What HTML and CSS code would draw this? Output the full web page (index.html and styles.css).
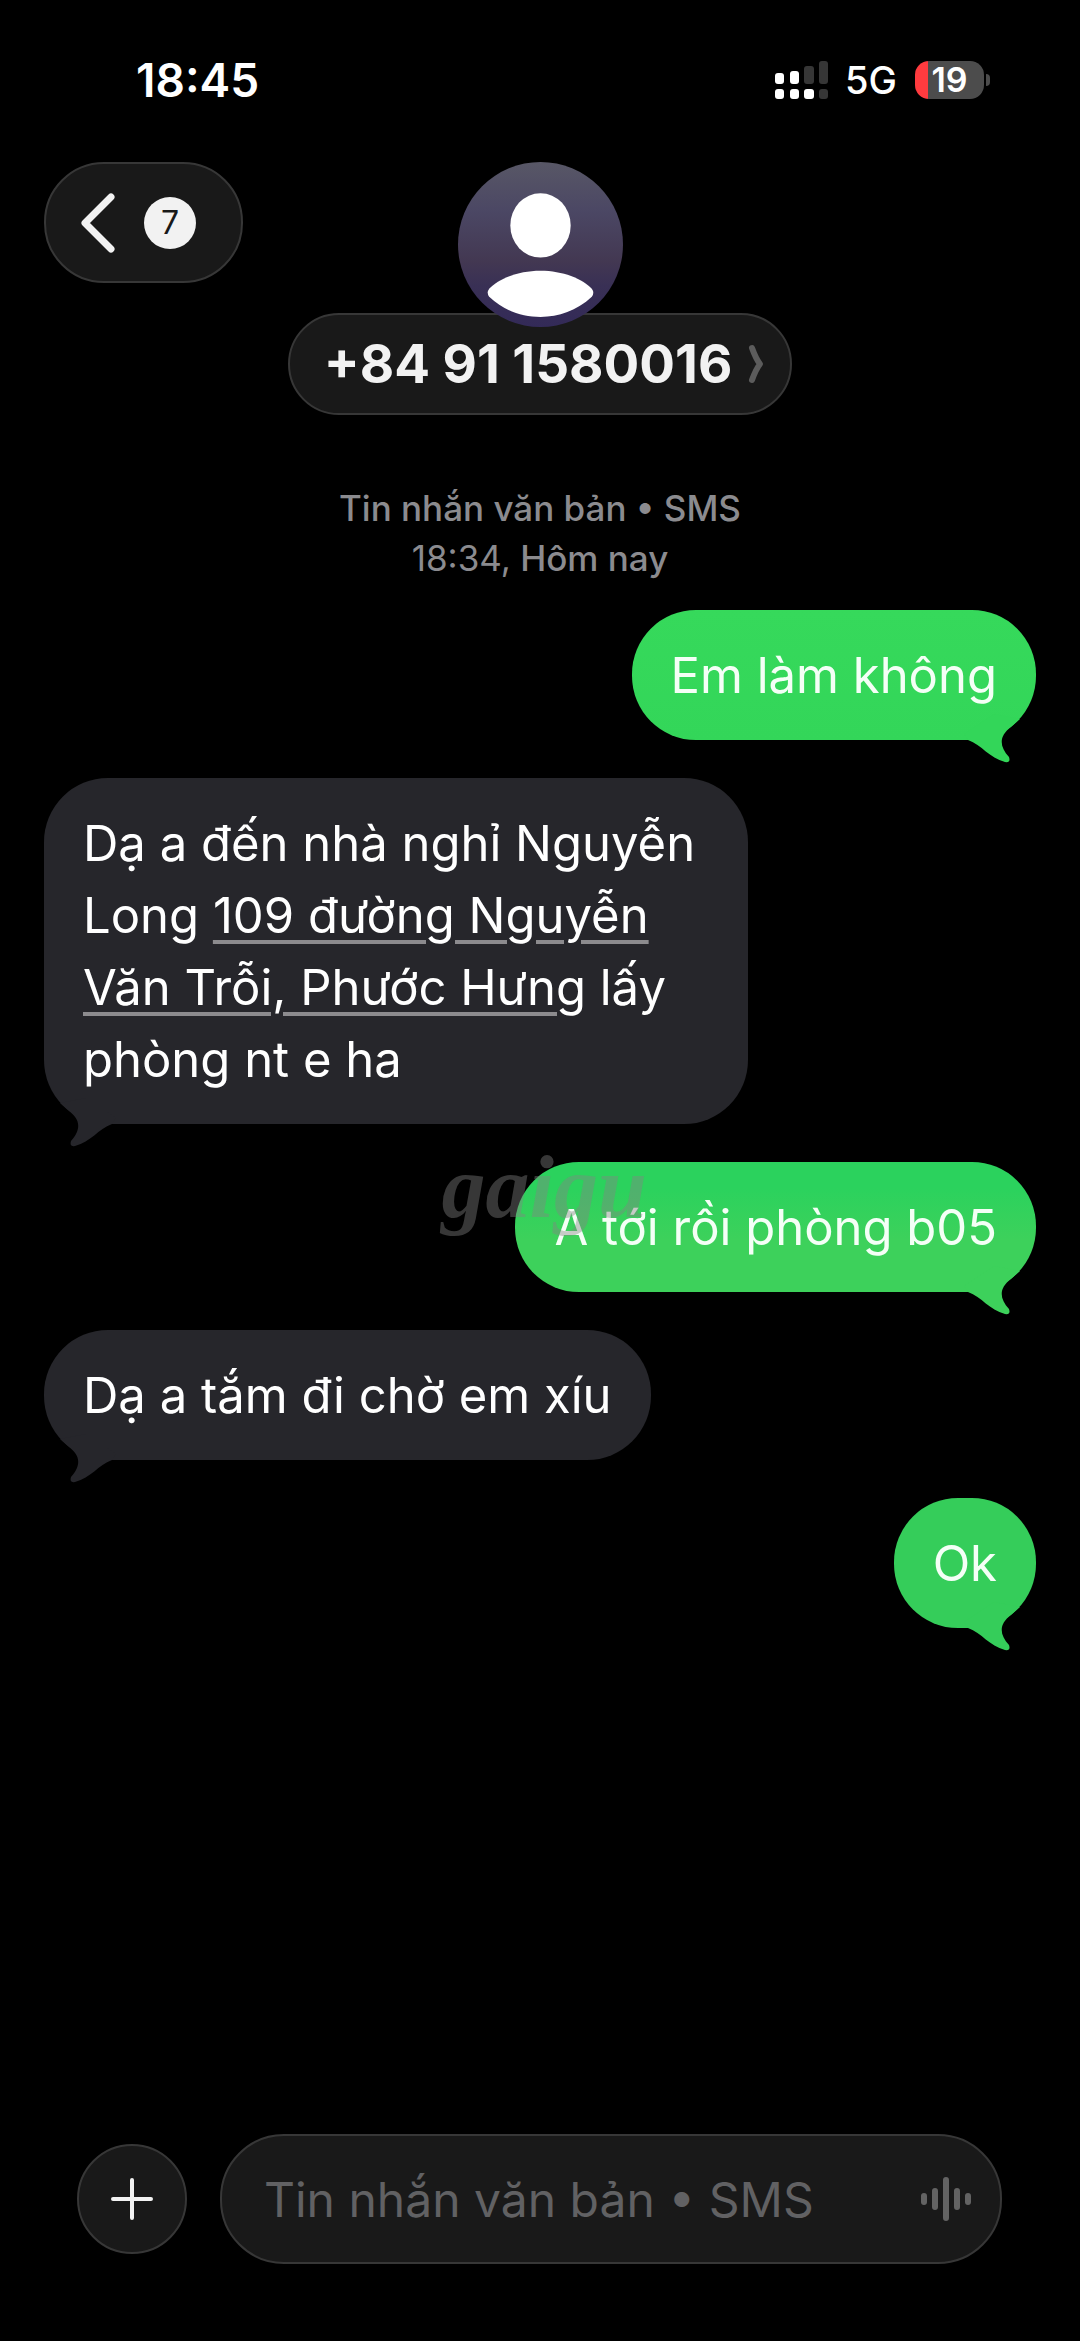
FILE: index.html
```html
<!DOCTYPE html>
<html lang="vi">
<head>
<meta charset="utf-8">
<meta name="viewport" content="width=device-width, initial-scale=1">
<title>Tin nhắn</title>
<link rel="stylesheet" href="styles.css">
</head>
<body>
<svg width="0" height="0" class="defs" aria-hidden="true">
  <symbol id="tail" viewBox="0 0 72 50">
    <path d="M4 26 C18 31 25 44 41 48 Q47 49 45 43 C35 32 35 22 47 13 L56 5 L30 0 L0 20 Z"/>
  </symbol>
</svg>

<div class="status">
  <time class="clock">18:45</time>
  <div class="indicators">
    <svg class="signal" width="54" height="38" viewBox="0 0 54 38" aria-hidden="true">
      <g fill="#fff">
        <rect x="0" y="12" width="9" height="11" rx="3"/>
        <rect x="15" y="10" width="9" height="13" rx="3"/>
        <rect x="0" y="28" width="9" height="10" rx="3"/>
        <rect x="15" y="28" width="9" height="10" rx="3"/>
        <rect x="29" y="28" width="10" height="10" rx="3"/>
      </g>
      <g fill="#363636">
        <rect x="29" y="5" width="10" height="18" rx="3"/>
        <rect x="44" y="0" width="9" height="23" rx="3"/>
        <rect x="44" y="28" width="9" height="10" rx="3"/>
      </g>
    </svg>
    <span class="network">5G</span>
    <span class="battery">19</span>
  </div>
</div>

<header class="header">
  <button class="back glass" type="button" aria-label="Quay lại">
    <svg width="36" height="60" viewBox="0 0 36 60" fill="none" stroke="#f2f2f2" stroke-width="7" stroke-linecap="round" stroke-linejoin="round" aria-hidden="true"><path d="M31 4 L5 30 L31 56"/></svg>
    <span class="unread">7</span>
  </button>
  <div class="contact">
    <svg class="avatar" width="165" height="165" viewBox="0 0 164 164" aria-hidden="true">
      <defs>
        <linearGradient id="dusk" x1="0" y1="0" x2="0" y2="1">
          <stop offset="0" stop-color="#585766"/>
          <stop offset=".3" stop-color="#4b4764"/>
          <stop offset=".6" stop-color="#433852"/>
          <stop offset=".75" stop-color="#393055"/>
          <stop offset="1" stop-color="#332a58"/>
        </linearGradient>
      </defs>
      <circle cx="82" cy="82" r="82" fill="url(#dusk)"/>
      <ellipse cx="82" cy="63" rx="30" ry="32" fill="#fff"/>
      <path d="M82 108 C104 108 124 116 133 126 Q136 130 133 134 C118 148 100 154 82 154 C64 154 46 148 31 134 Q28 130 31 126 C40 116 60 108 82 108 Z" fill="#fff"/>
    </svg>
    <button class="name glass" type="button">
      <span>+84 91 1580016</span>
      <svg width="16" height="40" viewBox="0 0 16 40" fill="none" stroke="#5c5c5c" stroke-width="6" stroke-linecap="round" stroke-linejoin="round" aria-hidden="true"><path d="M4 4 Q8 15 12 20 Q8 25 4 36"/></svg>
    </button>
  </div>
</header>

<main class="thread">
  <p class="stamp">Tin nhắn văn bản • SMS<br><span class="stamp-time">18:34,</span> Hôm nay</p>

  <div class="bubble sent">Em làm không<svg class="tail" aria-hidden="true"><use href="#tail"/></svg></div>

  <div class="bubble received">Dạ a đến nhà nghỉ Nguyễn Long <a href="#map">109 đường Nguyễn Văn Trỗi, Phước Hưng</a> lấy phòng nt e ha<svg class="tail" aria-hidden="true"><use href="#tail"/></svg></div>

  <div class="bubble sent mid">A tới rồi phòng b05<svg class="tail" aria-hidden="true"><use href="#tail"/></svg><span class="watermark">gaigu</span></div>

  <div class="bubble received">Dạ a tắm đi chờ em xíu<svg class="tail" aria-hidden="true"><use href="#tail"/></svg></div>

  <div class="bubble sent late">Ok<svg class="tail" aria-hidden="true"><use href="#tail"/></svg></div>
</main>

<form class="composer">
  <button class="plus glass" type="button" aria-label="Thêm">
    <svg width="42" height="42" viewBox="0 0 42 42" stroke="#f2f2f2" stroke-width="4" stroke-linecap="round" aria-hidden="true"><path d="M21 2V40M2 21H40"/></svg>
  </button>
  <div class="field glass">
    <input type="text" placeholder="Tin nhắn văn bản • SMS" aria-label="Tin nhắn văn bản">
    <button class="voice" type="button" aria-label="Ghi âm">
      <svg width="52" height="46" viewBox="0 0 52 46" stroke="#636363" stroke-width="6" stroke-linecap="round" aria-hidden="true"><path d="M4 20V26M15 15V31M26 4V42M37 15V31M48 20V26"/></svg>
    </button>
  </div>
</form>
</body>
</html>
```

FILE: styles.css
```css
* {
  box-sizing: border-box;
}

body {
  margin: 0;
  min-height: 100vh;
  display: flex;
  flex-direction: column;
  background: #000;
  color: #fff;
  font-family: Inter, "Liberation Sans", sans-serif;
}

button,
input {
  margin: 0;
  padding: 0;
  border: 0;
  background: none;
  color: inherit;
  font: inherit;
}

svg {
  display: block;
  flex: none;
}

.defs {
  position: absolute;
}

.glass {
  background: #191919;
  border: 2px solid #373737;
}

/* Status bar */
.status {
  display: flex;
  justify-content: space-between;
  align-items: center;
  padding: 52px 90px 54px 136px;
  line-height: 56px;
}

.clock {
  font-size: 46px;
  font-weight: 600;
}

.indicators {
  display: flex;
  align-items: center;
}

.network {
  margin: 0 18px 0 16px;
  font-size: 38px;
  font-weight: 500;
}

.battery {
  position: relative;
  width: 69px;
  height: 38px;
  margin-right: 6px;
  border-radius: 14px;
  background: linear-gradient(90deg, #ff3b3f 13px, #4c4c4c 13px);
  font-size: 34px;
  font-weight: 600;
  line-height: 38px;
  text-align: center;
}

.battery::after {
  content: "";
  position: absolute;
  top: 13px;
  right: -6px;
  width: 4px;
  height: 12px;
  border-radius: 0 4px 4px 0;
  background: #4c4c4c;
}

/* Conversation header */
.header {
  display: grid;
  grid-template-columns: 1fr auto 1fr;
  align-items: start;
  padding: 0 44px;
}

.back {
  display: flex;
  align-items: center;
  gap: 28px;
  width: 199px;
  height: 121px;
  padding-left: 34px;
  border-radius: 60px;
}

.unread {
  width: 52px;
  height: 52px;
  border-radius: 50%;
  background: #f2f2f2;
  color: #191919;
  font-size: 32px;
  line-height: 52px;
  text-align: center;
}

.contact {
  display: flex;
  flex-direction: column;
  align-items: center;
}

.avatar {
  z-index: 1;
  margin-bottom: -14px;
}

.name {
  display: flex;
  align-items: center;
  gap: 16px;
  height: 102px;
  padding: 0 26px 0 34px;
  border-radius: 51px;
  color: #f2f2f2;
  font-size: 53px;
  font-weight: 700;
}

/* Messages */
.thread {
  flex: 1;
  display: flex;
  flex-direction: column;
  gap: 38px;
  padding: 68px 44px;
}

.stamp {
  margin: 0 0 -11px;
  color: #8b8b8f;
  font-size: 35px;
  font-weight: 500;
  line-height: 50px;
  text-align: center;
}

.stamp-time {
  font-weight: 400;
}

.bubble {
  position: relative;
  max-width: 71%;
  padding: 30px 39px 28px;
  border-radius: 64px;
  font-size: 49px;
  line-height: 72px;
}

.sent {
  align-self: flex-end;
  background: linear-gradient(#36d95b, #33d659);
  color: #f4fff6;
  fill: #33d659;
}

.sent.mid {
  background: linear-gradient(#2bd25d 20%, #3dd15b 60%);
  fill: #3dd15b;
}

.sent.late {
  background: #35cd5a;
  fill: #35cd5a;
}

.received {
  align-self: flex-start;
  background: #26262b;
  fill: #26262b;
}

.bubble a {
  color: inherit;
  text-decoration: underline;
  text-decoration-color: #8c8b8e;
  text-decoration-thickness: 4px;
  text-underline-offset: 7px;
}

.tail {
  position: absolute;
  right: 0;
  bottom: -24px;
  width: 72px;
  height: 50px;
}

.received .tail {
  right: auto;
  left: 0;
  transform: scaleX(-1);
}

.watermark {
  position: absolute;
  top: -10px;
  left: -74px;
  color: rgba(132, 132, 132, .42);
  font-family: "Liberation Serif", serif;
  font-size: 88px;
  font-style: italic;
  font-weight: 700;
}

/* Composer */
.composer {
  display: flex;
  align-items: center;
  gap: 33px;
  padding: 0 78px 77px 77px;
}

.plus {
  display: grid;
  place-items: center;
  flex: none;
  width: 110px;
  height: 110px;
  border-radius: 50%;
}

.field {
  flex: 1;
  min-width: 0;
  display: flex;
  align-items: center;
  height: 130px;
  padding: 0 28px 0 42px;
  border-radius: 64px;
}

.field input {
  flex: 1;
  min-width: 0;
  outline: 0;
  font-size: 48px;
}

.field input::placeholder {
  color: #616163;
  opacity: 1;
}
```
